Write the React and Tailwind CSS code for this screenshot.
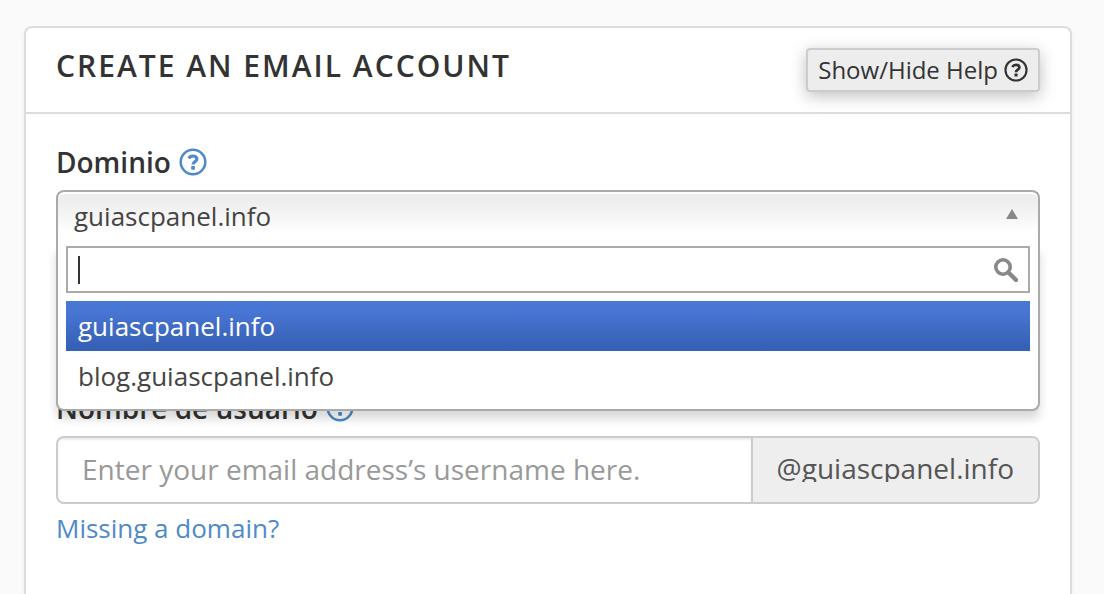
import { useState } from 'react';

const DOMAINS = ['guiascpanel.info', 'blog.guiascpanel.info'];

export default function App() {
  const [domain, setDomain] = useState(DOMAINS[0]);
  const [username, setUsername] = useState('');

  return (
    <div className="min-h-screen flex flex-col bg-[#fafafa] pl-6 pr-8 pt-[26px] font-['Open_Sans',sans-serif] text-[#333]">
      <main className="flex-1 bg-white border-2 border-b-0 border-[#ddd] rounded-t-lg shadow-[0_2px_4px_rgba(0,0,0,0.05)]">
        <header className="flex items-start justify-between px-[30px] py-5 border-b-2 border-[#ddd]">
          <h1 className="text-[30px] leading-9 font-semibold tracking-[2px] uppercase">Create an Email Account</h1>
          <button type="button"
            className="flex items-center gap-1.5 h-11 px-2.5 bg-[#ededed] border-2 border-[#ccc] rounded text-2xl shadow-[0_4px_16px_rgba(0,0,0,0.25)]">
            Show/Hide Help
            <HelpIcon className="size-6" />
          </button>
        </header>

        <form className="px-[30px] pt-7">
          <FieldLabel htmlFor="domain">Dominio</FieldLabel>
          <DomainSelect value={domain} onChange={setDomain} />

          <div className="mt-36">
            <FieldLabel htmlFor="username">Nombre de usuario</FieldLabel>
            <div className="flex h-[68px] border-2 border-[#ccc] rounded-lg overflow-hidden text-[28px]">
              <input id="username" type="text" value={username}
                onChange={e => setUsername(e.target.value)}
                placeholder="Enter your email address’s username here."
                className="flex-1 min-w-0 px-6 pb-0.5 placeholder:text-[#999] shadow-[inset_0_2px_2px_rgba(0,0,0,0.075)] outline-none" />
              <div className="flex items-center px-6 pb-1 bg-[#eee] border-l-2 border-[#ccc] text-[#555]">
                <span className="overflow-hidden leading-7">@{domain}</span>
              </div>
            </div>
            <a href="#domains" className="inline-block mt-1.5 text-[26px] leading-9 text-[#4e8ac9]">Missing a domain?</a>
          </div>
        </form>
      </main>
    </div>
  );
}

function FieldLabel({ htmlFor, children }) {
  return (
    <div className="flex items-center gap-2 h-10 mb-2">
      <label htmlFor={htmlFor} className="text-[28px] leading-10 font-semibold">{children}</label>
      <button type="button" aria-label="Help" className="text-[#4e8ac9]">
        <HelpIcon className="size-7" />
      </button>
    </div>
  );
}

function HelpIcon({ className }) {
  return (
    <svg viewBox="0 0 28 28" fill="none" stroke="currentColor" className={className} aria-hidden="true">
      <circle cx="14" cy="14" r="12.3" strokeWidth="2.5" />
      <path d="M9.7 10.4C10.7 8.8 12.2 8 14 8C16.4 8 17.9 9.4 17.9 11.1C17.9 13.8 14 13.4 14 16.6" strokeWidth="3.2" />
      <rect x="12.2" y="18" width="3.7" height="3.7" rx="0.6" fill="currentColor" stroke="none" />
    </svg>
  );
}

function DomainSelect({ value, onChange }) {
  const [search, setSearch] = useState('');
  const [active, setActive] = useState(value);
  const options = DOMAINS.filter(d => d.includes(search));

  return (
    <div className="relative text-[26px] text-[#444]">
      <button id="domain" type="button" aria-haspopup="listbox" aria-expanded="true"
        className="flex items-center justify-between w-full h-[54px] pl-4 pr-5 pb-1 border-2 border-b-0 border-[#aaa] rounded-t-lg bg-linear-to-b from-[#eee] from-20% to-white to-80% shadow-[inset_0_2px_0_#fff]">
        {value}
        <svg viewBox="0 0 12 14" className="w-3 h-3.5 fill-[#888]"><path d="M6 0 12 10H0Z" /></svg>
      </button>
      <div className="absolute top-full inset-x-0 z-10 px-2 pt-0.5 pb-2 bg-white border-2 border-t-0 border-[#aaa] rounded-b-lg shadow-[0_8px_10px_rgba(0,0,0,0.15)]">
        <div className="flex items-center h-[47px] px-2.5 mb-2 border-2 border-[#aaa]">
          <span className="w-0.5 h-7 bg-[#333]" />
          <input type="text" aria-label="Search domains" value={search}
            onChange={e => setSearch(e.target.value)}
            className="flex-1 min-w-0 caret-transparent outline-none" />
          <svg viewBox="0 0 24 24" className="size-6 fill-none stroke-[#888]">
            <circle cx="9" cy="9" r="7.2" strokeWidth="3.6" />
            <path d="M15 15 22 22" strokeWidth="4.4" strokeLinecap="round" />
          </svg>
        </div>
        <ul role="listbox" aria-label="Dominio">
          {options.map(d => (
            <li key={d} role="option" aria-selected={d === value}
              onMouseEnter={() => setActive(d)}
              onClick={() => onChange(d)}
              className={`h-[50px] px-3 leading-[50px] cursor-pointer ${d === active ? 'bg-linear-to-b from-[#4876d4] from-20% to-[#3761b6] to-90% text-white' : ''}`}>
              {d}
            </li>
          ))}
        </ul>
      </div>
    </div>
  );
}
